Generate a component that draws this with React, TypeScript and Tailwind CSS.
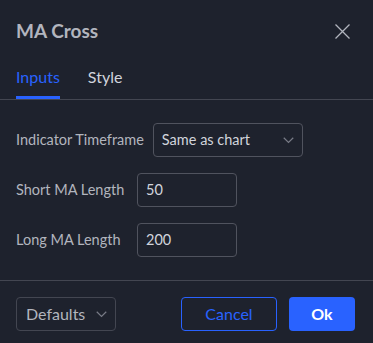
import React from "react";

const Chevron = ({ className = "" }: { className?: string }) => (
  <svg width="11" height="7" viewBox="0 0 11 7" className={className} fill="none">
    <path d="M0.75 0.75 L5.5 5.5 L10.25 0.75" stroke="currentColor" strokeWidth="1.2" />
  </svg>
);

export default function App() {
  return (
    <div
      className="w-[373px] h-[343px] bg-[#1e222d] flex flex-col overflow-hidden"
      style={{ fontFamily: "Lato, 'Noto Sans', sans-serif" }}
    >
      <div className="h-[62px] flex items-center justify-between pl-4 pr-[23px] shrink-0">
        <div className="text-[19px] font-bold text-[#b2b5be] leading-6">MA Cross</div>
        <svg width="15" height="15" viewBox="0 0 15 15" fill="none" className="text-[#b2b5be]">
          <path d="M0.5 0.5 L14.5 14.5 M14.5 0.5 L0.5 14.5" stroke="currentColor" strokeWidth="1.3" />
        </svg>
      </div>
      <div className="h-[38px] flex gap-7 px-4 border-b border-[#434651] shrink-0">
        <div className="flex flex-col h-[37px]">
          <div className="pt-[5px] leading-5 text-[16px] text-[#2962ff]">Inputs</div>
          <div className="flex-1" />
          <div className="h-[3px] bg-[#2962ff]" />
        </div>
        <div className="flex flex-col h-[37px]">
          <div className="pt-[5px] leading-5 text-[16px] text-[#d1d4dc]">Style</div>
        </div>
      </div>
      <div className="flex flex-col gap-4 px-4 pt-[23px] h-[181px] border-b border-[#434651] shrink-0">
        <div className="flex items-center gap-[9px]">
          <div className="text-[14.5px] text-[#b2b5be]">Indicator Timeframe</div>
          <div className="w-[150px] h-[34px] border border-[#50535e] rounded-[4px] flex items-center justify-between pl-[8px] pr-[8px]">
            <span className="text-[14.5px] text-[#d1d4dc]">Same as chart</span>
            <Chevron className="text-[#787b86]" />
          </div>
        </div>
        <div className="flex items-center">
          <div className="w-[121px] text-[14.5px] text-[#b2b5be]">Short MA Length</div>
          <div className="w-[100px] h-[34px] border border-[#50535e] rounded-[4px] flex items-center pl-[8px]">
            <span className="text-[14.5px] text-[#d1d4dc]">50</span>
          </div>
        </div>
        <div className="flex items-center">
          <div className="w-[121px] text-[14.5px] text-[#b2b5be]">Long MA Length</div>
          <div className="w-[100px] h-[34px] border border-[#50535e] rounded-[4px] flex items-center pl-[8px]">
            <span className="text-[14.5px] text-[#d1d4dc]">200</span>
          </div>
        </div>
      </div>
      <div className="flex items-center justify-between pl-4 pr-[18px] pt-[16px]">
        <div className="w-[100px] h-[34px] border border-[#434651] rounded-[4px] flex items-center justify-between pl-[9px] pr-[8px]">
          <span className="text-[16px] text-[#b2b5be]">Defaults</span>
          <Chevron className="text-[#787b86]" />
        </div>
        <div className="flex gap-3">
          <div className="w-[96px] h-[34px] border border-[#2962ff] rounded-[4px] flex items-center justify-center text-[16px] text-[#2962ff]">
            Cancel
          </div>
          <div className="w-[66px] h-[34px] bg-[#2962ff] rounded-[4px] flex items-center justify-center text-[16px] font-bold text-white">
            Ok
          </div>
        </div>
      </div>
    </div>
  );
}
